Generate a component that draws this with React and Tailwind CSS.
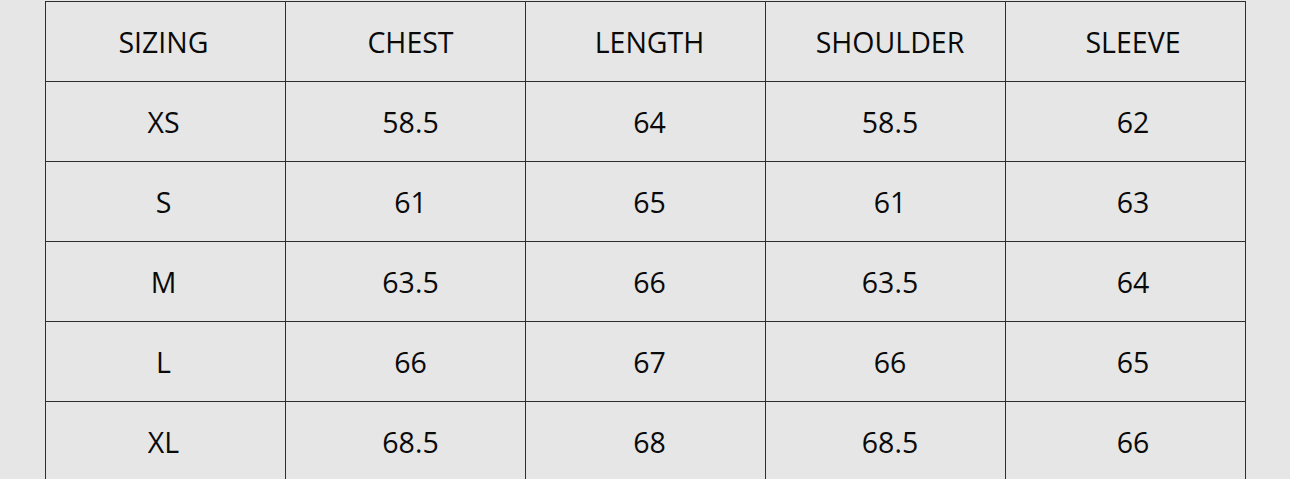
import React from "react";

const headers = ["SIZING", "CHEST", "LENGTH", "SHOULDER", "SLEEVE"];
const rows = [
  ["XS", "58.5", "64", "58.5", "62"],
  ["S", "61", "65", "61", "63"],
  ["M", "63.5", "66", "63.5", "64"],
  ["L", "66", "67", "66", "65"],
  ["XL", "68.5", "68", "68.5", "66"],
];

const colPad = ["pr-[4px]", "pl-[10px]", "pl-[8px]", "pl-[9px]", "pl-[15px]"];

export default function App() {
  return (
    <div className="w-[1290px] h-[479px] overflow-hidden bg-[#e6e6e6] pt-[1px]" style={{ fontFamily: '"Open Sans", sans-serif' }}>
      <div className="ml-[45px] w-[1201px] grid grid-cols-[repeat(5,240px)] border-l border-t border-[#2e2e2e] text-[#0a0a0a] text-[28.5px]">
        {[headers, ...rows].map((r, i) =>
          r.map((c, j) => (
            <div
              key={i + "-" + j}
              className={"h-[80px] pt-[2px] border-r border-b border-[#2e2e2e] flex items-center justify-center leading-none " + colPad[j]}
            >
              {c}
            </div>
          ))
        )}
      </div>
    </div>
  );
}
